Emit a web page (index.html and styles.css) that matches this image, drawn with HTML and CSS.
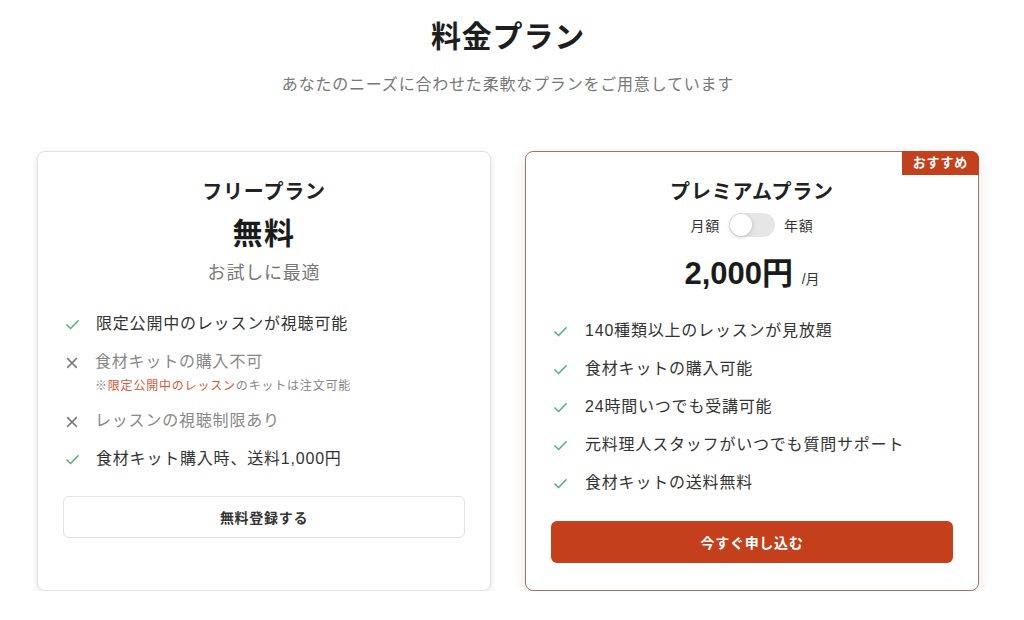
FILE: index.html
```html
<!DOCTYPE html>
<html lang="ja">
<head>
    <meta charset="UTF-8">
    <meta name="viewport" content="width=device-width, initial-scale=1.0">
    <title>料金プラン</title>
    <link rel="stylesheet" href="styles.css">
</head>
<body>
    <div class="page">
        <header class="pricing-header">
            <h1>料金プラン</h1>
            <p class="lead">あなたのニーズに合わせた柔軟なプランをご用意しています</p>
        </header>

        <div class="plans">
            <div class="plan">
                <h2 class="plan-name">フリープラン</h2>
                <div class="plan-price free">無料</div>
                <div class="plan-desc">お試しに最適</div>
                <ul class="features free-features">
                    <li class="yes">
                        <svg class="icon" viewBox="0 0 16 16"><path d="M2 8.5l4 3.8L14 4"/></svg>
                        <span>限定公開中のレッスンが視聴可能</span>
                    </li>
                    <li class="no">
                        <svg class="icon" viewBox="0 0 16 16"><path d="M3 3l10 10M13 3L3 13"/></svg>
                        <div>
                            <span>食材キットの購入不可</span>
                            <div class="note">※<em>限定公開中のレッスン</em>のキットは注文可能</div>
                        </div>
                    </li>
                    <li class="no">
                        <svg class="icon" viewBox="0 0 16 16"><path d="M3 3l10 10M13 3L3 13"/></svg>
                        <span>レッスンの視聴制限あり</span>
                    </li>
                    <li class="yes">
                        <svg class="icon" viewBox="0 0 16 16"><path d="M2 8.5l4 3.8L14 4"/></svg>
                        <span>食材キット購入時、送料1,000円</span>
                    </li>
                </ul>
                <button class="btn btn-outline">無料登録する</button>
            </div>

            <div class="plan featured">
                <div class="badge">おすすめ</div>
                <h2 class="plan-name">プレミアムプラン</h2>
                <div class="billing">
                    <span>月額</span>
                    <span class="switch"><span class="knob"></span></span>
                    <span>年額</span>
                </div>
                <div class="plan-price">2,000円 <small>/月</small></div>
                <ul class="features premium-features">
                    <li class="yes">
                        <svg class="icon" viewBox="0 0 16 16"><path d="M2 8.5l4 3.8L14 4"/></svg>
                        <span>140種類以上のレッスンが見放題</span>
                    </li>
                    <li class="yes">
                        <svg class="icon" viewBox="0 0 16 16"><path d="M2 8.5l4 3.8L14 4"/></svg>
                        <span>食材キットの購入可能</span>
                    </li>
                    <li class="yes">
                        <svg class="icon" viewBox="0 0 16 16"><path d="M2 8.5l4 3.8L14 4"/></svg>
                        <span>24時間いつでも受講可能</span>
                    </li>
                    <li class="yes">
                        <svg class="icon" viewBox="0 0 16 16"><path d="M2 8.5l4 3.8L14 4"/></svg>
                        <span>元料理人スタッフがいつでも質問サポート</span>
                    </li>
                    <li class="yes">
                        <svg class="icon" viewBox="0 0 16 16"><path d="M2 8.5l4 3.8L14 4"/></svg>
                        <span>食材キットの送料無料</span>
                    </li>
                </ul>
                <button class="btn btn-primary">今すぐ申し込む</button>
            </div>
        </div>
    </div>
</body>
</html>
```

FILE: styles.css
```css
body {
    margin: 0;
    background-color: #fff;
    color: #222;
    font-family: "Liberation Sans", "Noto Sans CJK JP", sans-serif;
    letter-spacing: 0.05em;
}
.page {
    width: 942px;
    margin-left: 37px;
}
.pricing-header {
    text-align: center;
    padding-top: 17px;
}
.pricing-header h1 {
    margin: 0;
    font-size: 30px;
    line-height: 40px;
    font-weight: bold;
    color: #1e1e1e;
}
.lead {
    margin: 17px 0 0;
    font-size: 16px;
    line-height: 22px;
    color: #777;
}
.plans {
    display: flex;
    gap: 34px;
    margin-top: 55px;
}
.plan {
    flex: 1;
    position: relative;
    box-sizing: border-box;
    padding: 26px 25px 27px;
    border: 1px solid #e2e2e2;
    border-radius: 8px;
    background-color: #fff;
    box-shadow: 0 2px 6px rgba(0, 0, 0, 0.12);
    text-align: center;
}
.featured {
    border-color: #a9705e;
    box-shadow: 0 4px 14px rgba(0, 0, 0, 0.1);
}
.badge {
    position: absolute;
    top: -1px;
    right: -1px;
    background-color: #c2401c;
    color: #fff;
    font-size: 13px;
    font-weight: bold;
    line-height: 24px;
    padding: 0 11px;
    border-radius: 0 8px 0 0;
}
.plan-name {
    margin: 0;
    font-size: 20px;
    line-height: 28px;
    font-weight: bold;
}
.plan-price {
    margin-top: 17px;
    font-size: 31px;
    line-height: 40px;
    font-weight: bold;
    color: #1b1b1b;
    letter-spacing: 0;
}
.plan-price.free {
    margin-top: 8px;
    font-size: 30px;
    letter-spacing: 0.05em;
}
.plan-price small {
    font-size: 14px;
    font-weight: normal;
    color: #333;
}
.plan-desc {
    margin-top: 7px;
    font-size: 18px;
    line-height: 24px;
    color: #777;
}
.billing {
    display: flex;
    justify-content: center;
    align-items: center;
    gap: 9px;
    margin-top: 7px;
    font-size: 14px;
    color: #333;
}
.switch {
    display: block;
    width: 46px;
    height: 24px;
    border-radius: 12px;
    background-color: #e6e6e6;
    position: relative;
}
.knob {
    position: absolute;
    top: 1px;
    left: 1px;
    width: 22px;
    height: 22px;
    border-radius: 50%;
    background-color: #fff;
    box-shadow: 0 1px 4px rgba(0, 0, 0, 0.2);
}
.features {
    list-style: none;
    margin: 28px 0 0;
    padding: 0 2px;
    display: flex;
    flex-direction: column;
    gap: 16px;
    text-align: left;
}
.premium-features {
    margin-top: 21px;
}
.features li {
    display: flex;
    align-items: flex-start;
    gap: 16px;
    font-size: 16px;
    line-height: 22px;
    color: #333;
}
.free-features .note-item {
    margin-bottom: 0;
}
.premium-features li {
    gap: 17px;
}
.icon {
    flex: none;
    width: 15px;
    height: 15px;
    margin-top: 4px;
    fill: none;
    stroke-width: 1.7;
    stroke-linecap: round;
    stroke-linejoin: round;
}
.yes .icon {
    stroke: #58b57a;
}
.no .icon {
    stroke: #777;
    width: 14px;
    height: 14px;
    margin-top: 5px;
}
.no {
    color: #888 !important;
}
.note {
    margin-top: 6px;
    font-size: 12px;
    line-height: 15px;
    color: #888;
}
.note em {
    font-style: normal;
    color: #d9583a;
}
.btn {
    display: block;
    width: 100%;
    height: 42px;
    margin-top: 26px;
    border-radius: 6px;
    font-family: inherit;
    font-size: 14px;
    font-weight: bold;
    letter-spacing: 0.05em;
    cursor: pointer;
}
.btn-outline {
    background-color: #fff;
    border: 1px solid #e3e3e3;
    color: #333;
}
.btn-primary {
    margin-top: 27px;
    background-color: #c43f1c;
    border: none;
    color: #fff;
}
```
